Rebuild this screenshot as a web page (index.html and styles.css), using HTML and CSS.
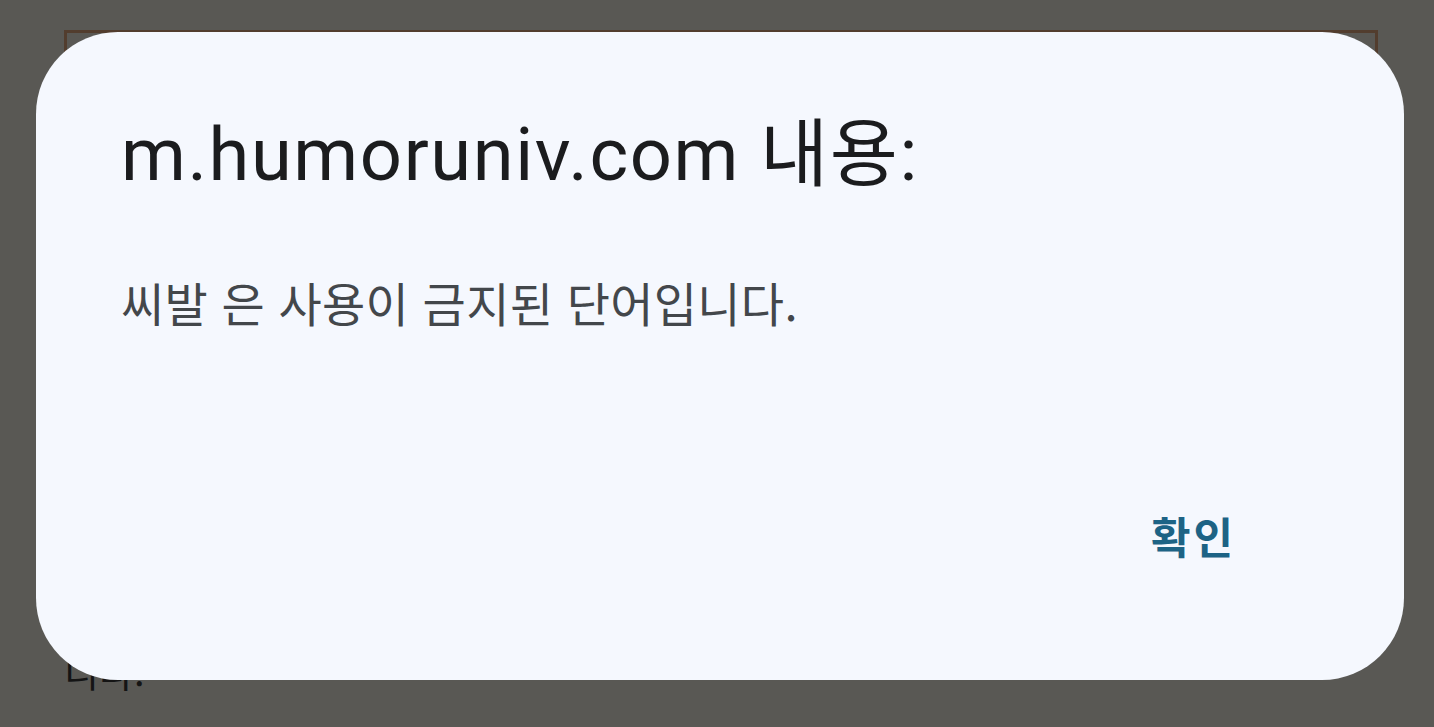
FILE: index.html
```html
<!DOCTYPE html>
<html lang="ko">
<head>
    <meta charset="UTF-8">
    <meta name="viewport" content="width=device-width, initial-scale=1.0">
    <title>m.humoruniv.com</title>
    <link rel="stylesheet" href="styles.css">
</head>
<body>
    <div class="page">
        <div class="frame"></div>
        <p class="behind">니다.</p>
    </div>

    <div class="dialog" role="alertdialog">
        <h1 class="dialog-title">m.humoruniv.com 내용:</h1>
        <p class="dialog-message">씨발 은 사용이 금지된 단어입니다.</p>
        <div class="dialog-actions">
            <button type="button" class="dialog-button">확인</button>
        </div>
    </div>
</body>
</html>
```

FILE: styles.css
```css
html, body {
    height: 100%;
}
body {
    margin: 0;
    background-color: #595854;
    font-family: Roboto, "Noto Sans CJK KR", sans-serif;
    overflow: hidden;
}
.page {
    padding: 30px 56px 0 64px;
}
.frame {
    height: 600px;
    border: 3px solid #523d2e;
    border-bottom: none;
}
.behind {
    margin: 13px 0 0 0;
    font-family: "Noto Sans CJK KR", sans-serif;
    font-size: 38px;
    line-height: 50px;
    color: #141414;
}
.dialog {
    position: absolute;
    left: 36px;
    top: 32px;
    width: 1368px;
    height: 648px;
    box-sizing: border-box;
    padding: 0 168px 0 85px;
    background-color: #f5f8fe;
    border-radius: 82px;
    display: flex;
    flex-direction: column;
}
.dialog-title {
    margin: 83px 0 0;
    font-weight: 400;
    font-size: 74px;
    line-height: 80px;
    color: #1b1c1e;
    letter-spacing: 1.6px;
}
.dialog-message {
    margin: 77px 0 0;
    font-family: "Noto Sans CJK KR", sans-serif;
    font-size: 47px;
    line-height: 60px;
    letter-spacing: 0.3px;
    color: #43474b;
}
.dialog-actions {
    margin-top: auto;
    margin-bottom: 120px;
    display: flex;
    justify-content: flex-end;
}
.dialog-button {
    padding: 0;
    border: none;
    background: none;
    font-family: "Noto Sans CJK KR", sans-serif;
    font-weight: 700;
    font-size: 43px;
    line-height: 50px;
    letter-spacing: 3px;
    color: #1d6385;
    cursor: pointer;
}
```
